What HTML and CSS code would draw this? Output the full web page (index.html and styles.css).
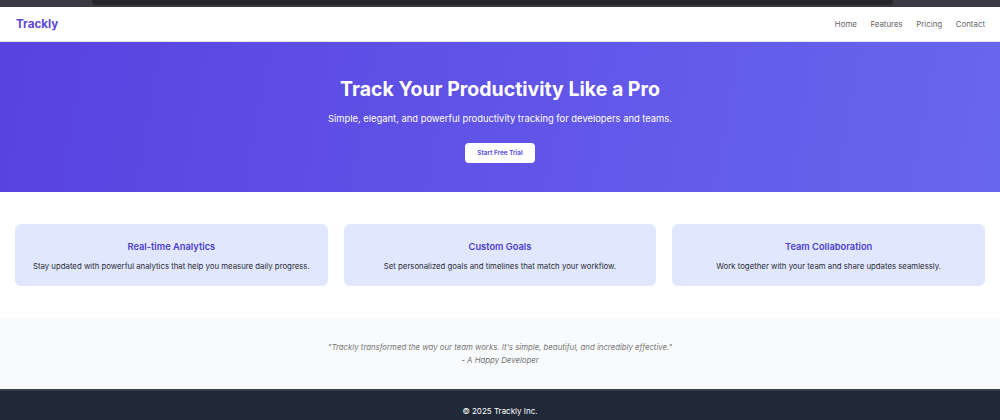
FILE: index.html
```html
<!DOCTYPE html>
<html lang="en">
<head>
<meta charset="utf-8">
<title>Trackly</title>
<link rel="stylesheet" href="styles.css">
</head>
<body>
<div class="topstrip"><div class="topstrip-inner"></div></div>
<header class="nav">
  <div class="logo">Trackly</div>
  <nav class="links">
    <a href="#">Home</a>
    <a href="#">Features</a>
    <a href="#">Pricing</a>
    <a href="#">Contact</a>
  </nav>
</header>
<section class="hero">
  <h1>Track Your Productivity Like a Pro</h1>
  <p>Simple, elegant, and powerful productivity tracking for developers and teams.</p>
  <button class="cta">Start Free Trial</button>
</section>
<section class="features">
  <div class="card">
    <h3>Real-time Analytics</h3>
    <p>Stay updated with powerful analytics that help you measure daily progress.</p>
  </div>
  <div class="card">
    <h3>Custom Goals</h3>
    <p>Set personalized goals and timelines that match your workflow.</p>
  </div>
  <div class="card">
    <h3>Team Collaboration</h3>
    <p>Work together with your team and share updates seamlessly.</p>
  </div>
</section>
<section class="testimonial">
  <p>"Trackly transformed the way our team works. It's simple, beautiful, and incredibly effective."</p>
  <p class="author">- A Happy Developer</p>
</section>
<footer class="footer">© 2025 Trackly Inc.</footer>
</body>
</html>
```
FILE: styles.css
```css
* { box-sizing: border-box; }
html, body { margin: 0; padding: 0; }
body {
  font-family: Inter, "Noto Sans", sans-serif;
  color: #333;
  background: #fff;
}
.topstrip {
  height: 7px;
  background: #3a3a40;
  padding: 0 107px 0 92px;
}
.topstrip-inner {
  height: 5px;
  background: #26262b;
  border-radius: 0 0 4px 4px;
}
.nav {
  height: 35px;
  display: flex;
  align-items: center;
  justify-content: space-between;
  padding: 0 15px 0 16px;
  background: #fff;
  border-bottom: 1px solid #e5e7eb;
}
.logo {
  font-size: 11.6px;
  font-weight: 700;
  color: #5b46d8;
}
.links { display: flex; gap: 13.5px; }
.links a {
  font-size: 7.9px;
  color: #666;
  text-decoration: none;
}
.hero {
  height: 150px;
  background: linear-gradient(100deg, #5842e0 0%, #6966ef 100%);
  color: #fff;
  text-align: center;
  padding-top: 34px;
}
.hero h1 {
  margin: 0;
  font-size: 19.5px;
  font-weight: 700;
  line-height: 26px;
}
.hero p {
  margin: 8px 0 0;
  font-size: 9.4px;
  line-height: 18px;
}
.cta {
  margin-top: 15px;
  height: 20px;
  width: 70px;
  padding: 0;
  border: none;
  border-radius: 4px;
  background: #fff;
  color: #4f46e5;
  font-family: inherit;
  font-size: 6.4px;
  font-weight: 600;
  display: block;
  margin-left: auto;
  margin-right: auto;
}
.features {
  display: grid;
  grid-template-columns: repeat(3, 1fr);
  gap: 16px;
  padding: 32px 15px;
  height: 126px;
}
.card {
  background: #e0e7ff;
  border-radius: 6px;
  text-align: center;
  padding: 16px 10px 0;
  height: 62px;
}
.card h3 {
  margin: 0;
  font-size: 9.3px;
  font-weight: 600;
  color: #4f3fcf;
  line-height: 14px;
}
.card p {
  margin: 6px 0 0;
  font-size: 7.8px;
  line-height: 12px;
  color: #2d2d33;
}
.testimonial {
  height: 71px;
  background: #f8fafc;
  text-align: center;
  padding-top: 23px;
}
.testimonial p {
  margin: 0;
  font-size: 7.8px;
  line-height: 12px;
  font-style: italic;
  color: #777;
}
.testimonial .author { margin-top: 1px; }
.footer {
  height: 31px;
  background: #1f2937;
  color: #fff;
  text-align: center;
  font-size: 8px;
  padding-top: 15px;
  border-top: 2px solid #3a414c;
}
```
